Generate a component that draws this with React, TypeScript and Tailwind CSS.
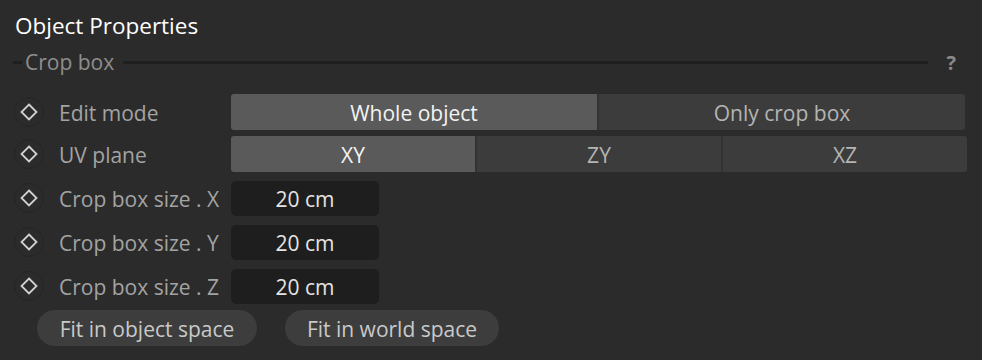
const font = { fontFamily: '"Open Sans", "Noto Sans", sans-serif' };

function KeyDiamond() {
  return (
    <div className="flex h-[30px] w-[30px] shrink-0 items-center justify-center rounded-full border border-[#252525]">
      <svg width="18" height="18" viewBox="0 0 18 18">
        <path d="M9 1.5 L16.5 9 L9 16.5 L1.5 9 Z" fill="none" stroke="#d2d2d2" strokeWidth="1.8" strokeLinejoin="miter" />
      </svg>
    </div>
  );
}

function Row({ label, children, className = '' }: { label: string; children: React.ReactNode; className?: string }) {
  return (
    <div className={`flex h-9 items-center ${className}`}>
      <KeyDiamond />
      <div className="ml-[15px] w-[172px] shrink-0 pt-[3px] text-[21px] text-[#a3a3a3]">{label}</div>
      {children}
    </div>
  );
}

function Segmented({ options, active, width }: { options: string[]; active: number; width: string }) {
  return (
    <div className={`flex h-9 gap-[2px] overflow-hidden rounded-[3px] bg-[#333333] ${width}`}>
      {options.map((o, i) => (
        <div
          key={o}
          className={`flex flex-1 items-center justify-center pt-[3px] text-[21px] ${
            i === active ? 'bg-[#5a5a5a] text-[#f2f2f2]' : 'bg-[#3c3c3c] text-[#b4b4b4]'
          }`}
        >
          {o}
        </div>
      ))}
    </div>
  );
}

function NumberField({ value }: { value: string }) {
  return (
    <div className="flex h-[35px] w-[148px] items-center justify-center rounded-[5px] bg-[#1e1e1e] pt-[3px] text-[21px] text-[#e4e4e4]">
      {value}
    </div>
  );
}

export default function App() {
  return (
    <div className="h-[360px] w-[982px] overflow-hidden bg-[#2b2b2b]" style={font}>
      <div className="flex h-[50px] items-center pl-[15px] pt-[2px] text-[22.5px] text-white">Object Properties</div>

      <div className="flex h-[24px] items-center pl-[13px] pr-[26px]">
        <div className="h-[3px] w-[9px] bg-[#1f1f1f]" />
        <span className="px-[3px] pt-[2px] text-[21px] text-[#8e8e8e]">Crop box</span>
        <div className="ml-[6px] h-[3px] w-[805px] bg-[#1f1f1f]" />
        <span className="ml-auto pt-[2px] text-[20px] font-bold text-[#8a8a8a]">?</span>
      </div>

      <div className="mt-[20px] pl-[14px]">
        <Row label="Edit mode">
          <Segmented options={['Whole object', 'Only crop box']} active={0} width="w-[734px]" />
        </Row>
        <Row label="UV plane" className="mt-[6px]">
          <Segmented options={['XY', 'ZY', 'XZ']} active={0} width="w-[736px]" />
        </Row>
        <Row label="Crop box size . X" className="mt-[8px]">
          <NumberField value="20 cm" />
        </Row>
        <Row label="Crop box size . Y" className="mt-[8px]">
          <NumberField value="20 cm" />
        </Row>
        <Row label="Crop box size . Z" className="mt-[8px]">
          <NumberField value="20 cm" />
        </Row>
        <div className="mt-[6px] flex gap-[28px] pl-[23px]">
          <button className="flex h-9 w-[220px] items-center justify-center rounded-full bg-[#3d3d3d] pt-[3px] text-[21px] text-[#c9c9c9]">
            Fit in object space
          </button>
          <button className="flex h-9 w-[214px] items-center justify-center rounded-full bg-[#3d3d3d] pt-[3px] text-[21px] text-[#c9c9c9]">
            Fit in world space
          </button>
        </div>
      </div>
    </div>
  );
}
